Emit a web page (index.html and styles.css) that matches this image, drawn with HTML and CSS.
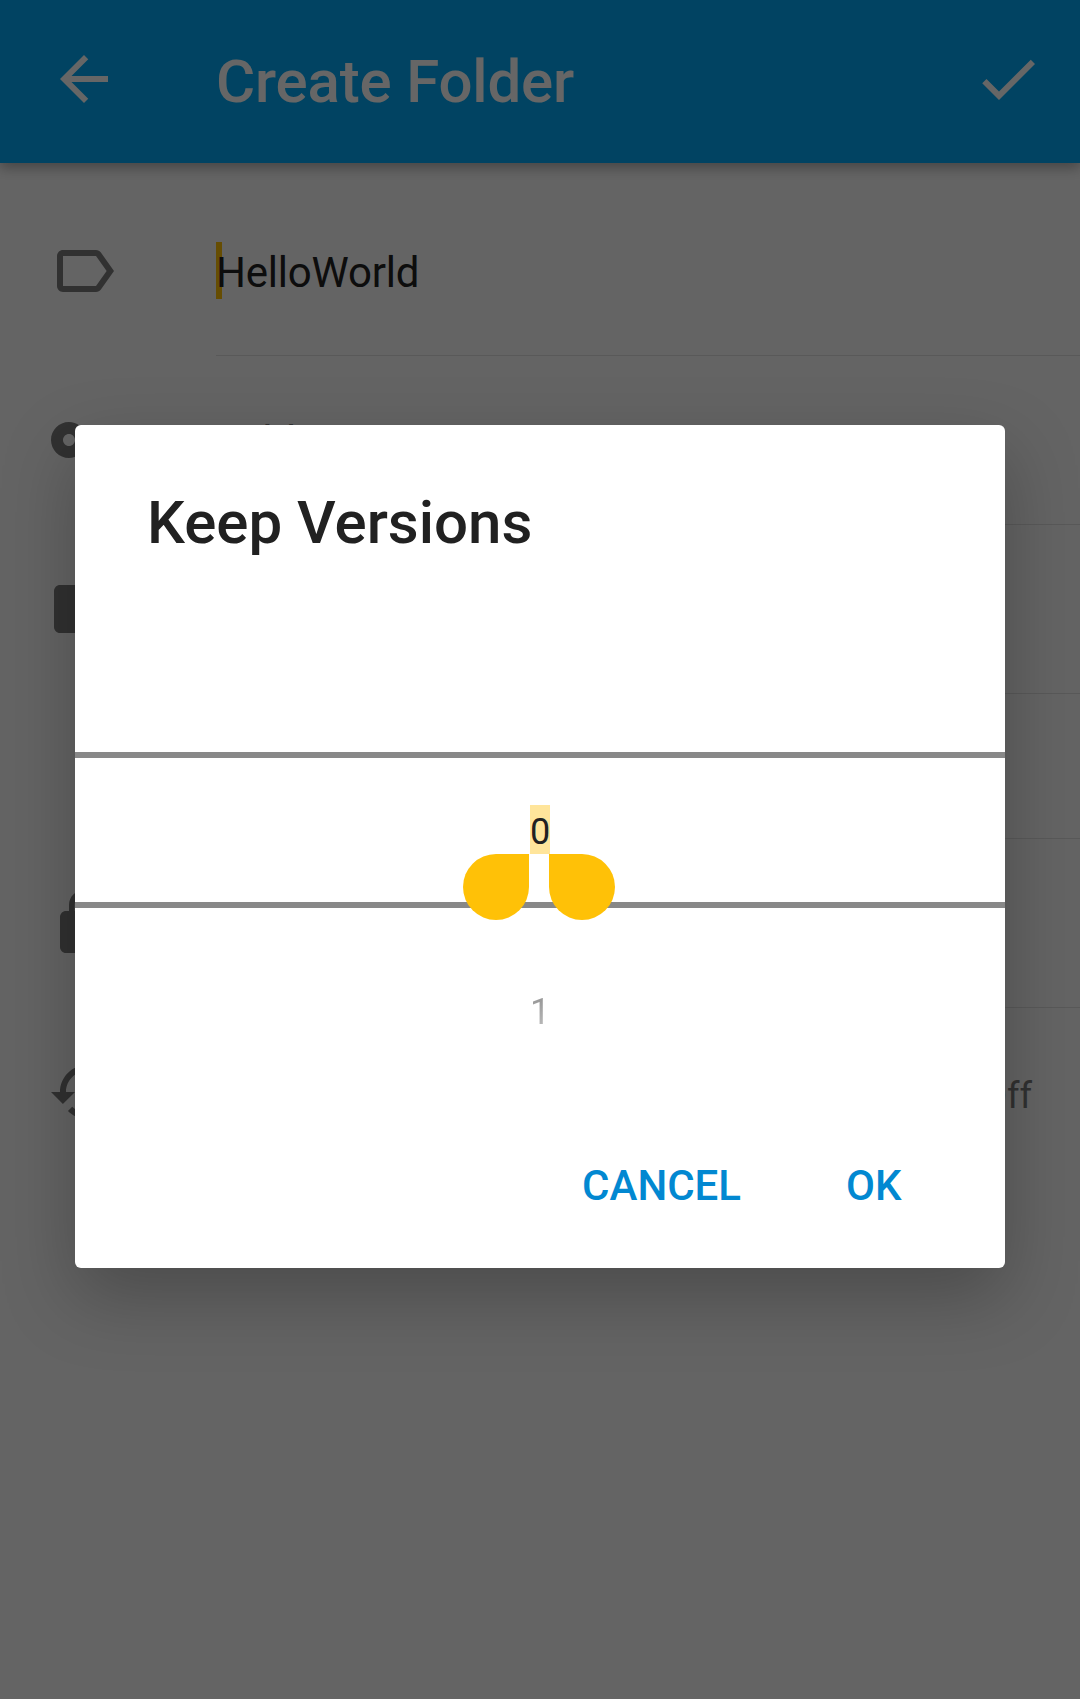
FILE: index.html
```html
<!DOCTYPE html>
<html lang="en">
<head>
<meta charset="utf-8">
<title>Create Folder</title>
<link rel="stylesheet" href="styles.css">
</head>
<body>
<div class="screen">
  <header class="toolbar">
    <svg class="icon" viewBox="0 0 24 24"><path d="M20 11H7.83l5.59-5.59L12 4l-8 8 8 8 1.41-1.41L7.83 13H20v-2z"/></svg>
    <h1 class="toolbar-title">Create Folder</h1>
    <svg class="icon" viewBox="0 0 24 24"><path d="M9 16.17L4.83 12l-1.42 1.41L9 19 21 7l-1.41-1.41z"/></svg>
  </header>
  <main class="form">
    <div class="row">
      <svg class="icon" viewBox="0 0 24 24"><path d="M17.63 5.84C17.27 5.33 16.67 5 16 5L5 5.01C3.9 5.01 3 5.9 3 7v10c0 1.1.9 1.99 2 1.99L16 19c.67 0 1.27-.33 1.63-.84L22 12l-4.37-6.16zM16 17H5V7h11l3.55 5L16 17z"/></svg>
      <div class="cell"><span class="input input-focused">HelloWorld</span></div>
    </div>
    <div class="row">
      <svg class="icon" viewBox="0 0 24 24"><path d="M12.65 10C11.83 7.67 9.61 6 7 6c-3.31 0-6 2.69-6 6s2.69 6 6 6c2.61 0 4.83-1.67 5.65-4H17v4h4v-4h2v-4H12.65zM7 14c-1.1 0-2-.9-2-2s.9-2 2-2 2 .9 2 2-.9 2-2 2z"/></svg>
      <div class="cell"><span class="input input-hint">Folder ID</span></div>
    </div>
    <div class="row">
      <svg class="icon" viewBox="0 0 24 24"><path d="M10 4H4c-1.1 0-1.99.9-1.99 2L2 18c0 1.1.9 2 2 2h16c1.1 0 2-.9 2-2V8c0-1.1-.9-2-2-2h-8l-2-2z"/></svg>
      <div class="cell"></div>
    </div>
    <div class="row row-short">
      <span class="icon"></span>
      <div class="cell"></div>
    </div>
    <div class="row">
      <svg class="icon" viewBox="0 0 24 24"><path d="M18 8h-1V6c0-2.76-2.24-5-5-5S7 3.24 7 6v2H6c-1.1 0-2 .9-2 2v10c0 1.1.9 2 2 2h12c1.1 0 2-.9 2-2V10c0-1.1-.9-2-2-2zm-2.900 0H8.900V6c0-1.710 1.390-3.100 3.100-3.100s3.100 1.390 3.100 3.100v2z"/></svg>
      <div class="cell"></div>
    </div>
    <div class="row">
      <svg class="icon" viewBox="0 0 24 24"><path d="M13 3c-4.970 0-9 4.030-9 9H1l3.890 3.890.07.14L9 12H6c0-3.870 3.130-7 7-7s7 3.130 7 7-3.130 7-7 7c-1.930 0-3.680-.79-4.940-2.060l-1.420 1.420C8.270 19.990 10.510 21 13 21c4.970 0 9-4.030 9-9s-4.030-9-9-9z"/></svg>
      <div class="cell cell-last"><span class="value">Off</span></div>
    </div>
  </main>
</div>
<div class="scrim">
  <section class="dialog">
    <h2 class="dialog-title">Keep Versions</h2>
    <div class="picker">
      <div class="picker-current">
        <span class="selected">0<i class="handle handle-start"></i><i class="handle handle-end"></i></span>
      </div>
      <div class="picker-next">1</div>
    </div>
    <div class="actions">
      <span class="action">CANCEL</span>
      <span class="action">OK</span>
    </div>
  </section>
</div>
</body>
</html>
```

FILE: styles.css
```css
* { box-sizing: border-box; }

body {
  margin: 0;
  font-family: Roboto, sans-serif;
  color: #212121;
  overflow: hidden;
}

h1, h2 { margin: 0; font-weight: 500; }

.screen {
  width: 1080px;
  height: 1699px;
  background: #fafafa;
}

.icon {
  display: block;
  flex: none;
  width: 72px;
  height: 72px;
  fill: currentColor;
}

.toolbar {
  display: flex;
  height: 163px;
  padding: 43px 36px 0 48px;
  color: #fff;
  background: #03a9f4;
  box-shadow: 0 5px 12px rgba(0, 0, 0, .3);
}

.toolbar-title {
  flex: 1;
  padding-left: 96px;
  font-size: 60px;
  line-height: 77px;
  letter-spacing: -.17px;
}

.form { padding-top: 24px; }

.row {
  display: flex;
  align-items: flex-start;
  gap: 96px;
  height: 169px;
  padding-left: 48px;
  color: #7b7b7b;
}

.row > .icon { margin-top: 48px; }

.row-short { height: 145px; }

.cell {
  flex: 1;
  display: flex;
  align-items: flex-start;
  height: 100%;
  padding-top: 55px;
  border-bottom: 1px solid #dedede;
}

.cell-last {
  justify-content: flex-end;
  padding-right: 48px;
  border-bottom: 0;
}

.input {
  height: 57px;
  color: #212121;
  font-size: 42px;
  line-height: 62px;
  letter-spacing: -.2px;
}

.input-focused {
  background: linear-gradient(#ffc107, #ffc107) no-repeat 0 0 / 6px 57px;
}

.input-hint { color: #808080; }

.value {
  padding-top: 12px;
  font-size: 36px;
  line-height: 42px;
}

.scrim {
  position: absolute;
  inset: 0;
  padding: 425px 75px 0;
  background: rgba(0, 0, 0, .6);
}

.dialog {
  height: 843px;
  background: #fff;
  border-radius: 6px;
  box-shadow: 0 28px 72px rgba(0, 0, 0, .25);
}

.dialog-title {
  height: 207px;
  padding: 63px 72px 0;
  font-size: 60px;
  line-height: 70px;
}

.picker {
  height: 480px;
  padding-top: 120px;
  font-size: 36px;
  text-align: center;
}

.picker-current {
  height: 156px;
  padding-top: 47px;
  border: solid #888;
  border-width: 6px 0;
}

.selected {
  position: relative;
  display: inline-block;
  height: 49px;
  line-height: 55px;
  background: #ffe59b;
}

.handle {
  position: absolute;
  top: 49px;
  width: 66px;
  height: 66px;
  background: #ffc107;
}

.handle-start { right: 21px; border-radius: 33px 0 33px 33px; }

.handle-end { left: 19px; border-radius: 0 33px 33px 33px; }

.picker-next {
  width: max-content;
  margin: 83px auto 0;
  line-height: 42px;
  color: transparent;
  background: linear-gradient(#909090, #c0c0c0);
  background-clip: text;
}

.actions {
  display: flex;
  justify-content: flex-end;
  gap: 105px;
  padding: 49px 103.5px 0;
  color: #0288d1;
  font-size: 42px;
  font-weight: 500;
  line-height: 50px;
}
```
